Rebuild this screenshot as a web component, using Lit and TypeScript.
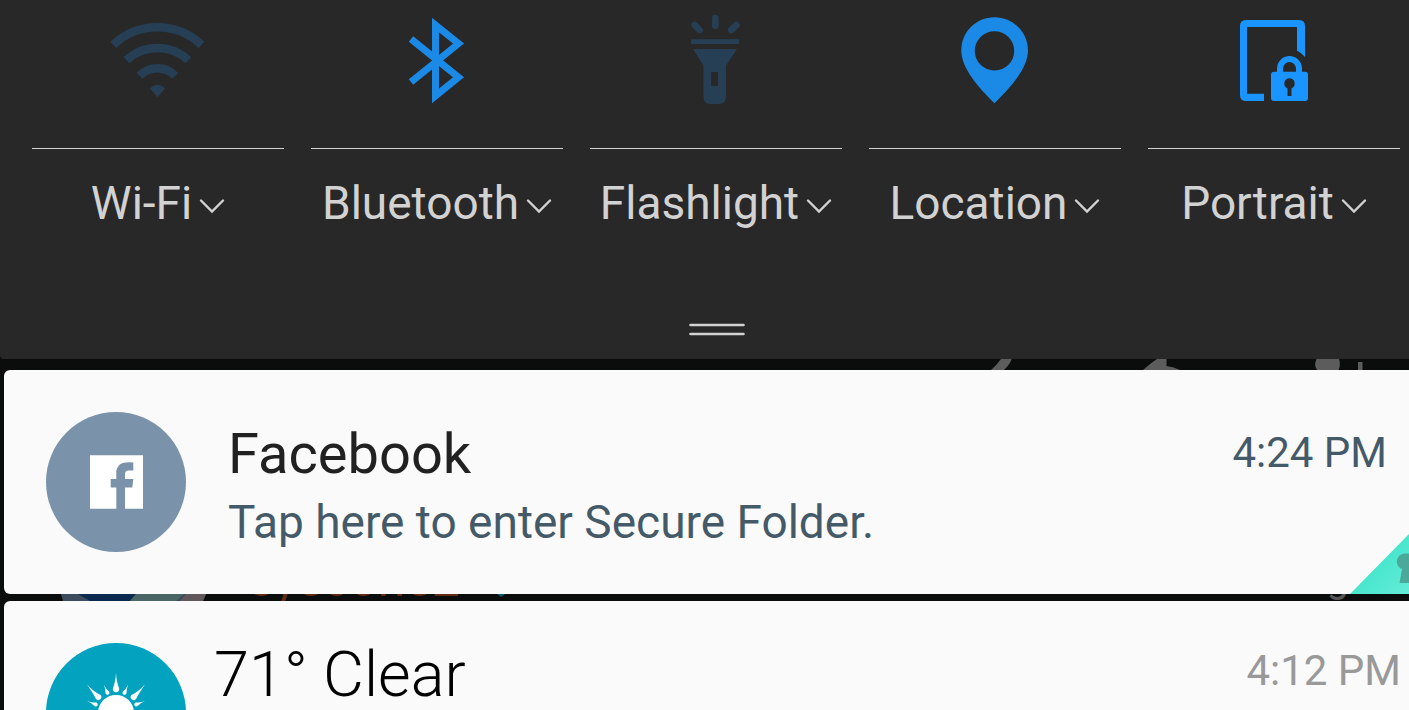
import { LitElement, html, svg, css } from "lit";
import { customElement, property } from "lit/decorators.js";

const icons = {
  wifi: svg`<g fill="none" stroke="#263f55" stroke-width="8.5">
      <path d="M5.300 44.900A64 64 0 0 1 93.500 44.900"/>
      <path d="M18.500 60.200A45 45 0 0 1 80.300 60.200"/>
      <path d="M31.600 75.900A24.500 24.500 0 0 1 67.200 75.900"/></g>
      <path fill="#263f55" d="M42 88.500Q49.400 81 57 88.500L49.400 97.300Z"/>`,
  bluetooth: svg`<path fill="none" stroke="#1b89e6" stroke-width="7" stroke-miterlimit="10"
      d="M24 39L71.500 77.300L48.500 96V25L71.500 43.600L24 82"/>`,
  flashlight: svg`<path stroke="#263f55" stroke-width="6.6" stroke-linecap="round"
      d="M49.300 18V25.700M28.600 25L33.700 30M70.500 25L65.300 30"/>
      <path fill="#263f55" d="M25 39.300H73V44H25Z"/>
      <path fill="#263f55" fill-rule="evenodd"
      d="M27 49H71L60 65.500V96Q60 104 53 104H44Q37.500 104 37.500 96V65.500ZM45 72V86H52V72Z"/>`,
  location: svg`<path fill="#1b89e6" fill-rule="evenodd"
      d="M49.500 17.300C68 17.300 83 32 83 50.500C83 68 66 87 49.500 103.300C33 87 16.300 68 16.300 50.500C16.300 32 31 17.300 49.500 17.300ZM49.500 31.200A19.700 19.700 0 1 0 49.500 70.600A19.700 19.700 0 1 0 49.500 31.200Z"/>`,
  portrait: svg`<path fill="#1a95ff"
      d="M22 20H75Q81 20 81 26V57Q77.500 52.500 73 50.700V27H23V93.700H40V101H22Q16 101 16 95V26Q16 20 22 20Z"/>
      <path fill="none" stroke="#1a95ff" stroke-width="6" d="M56 73V68.500A9.500 9.500 0 0 1 75 68.500V73"/>
      <path fill="#1a95ff" fill-rule="evenodd"
      d="M50 71.700H81Q84 71.700 84 74.700V98Q84 101 81 101H50Q47 101 47 98V74.700Q47 71.700 50 71.700ZM63.500 88.500V96H67.500V88.500A5.300 5.300 0 1 0 63.500 88.500Z"/>`,
};

@customElement("quick-toggle")
class QuickToggle extends LitElement {
  @property() label = "";
  @property() icon: keyof typeof icons = "wifi";

  static styles = css`
    :host { display: block; min-width: 0; }
    button {
      display: block; width: 100%; padding: 0; border: 0; background: none;
      color: #d2d2d2; font: inherit; text-align: center; white-space: nowrap;
    }
    .toggle { height: 149px; border-bottom: 1px solid #d2d2d2; box-sizing: border-box; }
    .toggle svg { display: block; width: 100px; height: 120px; margin: 0 auto 28px; }
    .details {
      display: flex; align-items: center; justify-content: center; gap: 7px;
      margin-top: 26px; font-size: 46px; line-height: 56px;
    }
    .details svg { width: 26px; height: 16px; margin-top: 6px; }
  `;

  render() {
    return html`
      <button class="toggle" aria-label=${this.label}>
        <svg viewBox="0 0 100 120">${icons[this.icon]}</svg>
      </button>
      <button class="details">
        ${this.label}
        <svg viewBox="0 0 26 16" fill="none" stroke="#d2d2d2" stroke-width="2.4" stroke-linecap="round">
          <path d="M2 2.500L13 13.500L24 2.500"/>
        </svg>
      </button>`;
  }
}

@customElement("app-root")
class AppRoot extends LitElement {
  static styles = css`
    :host {
      display: block; height: 100vh; overflow: hidden; background: #0b0d0c;
      font-family: Roboto, "Liberation Sans", sans-serif;
    }
    .panel {
      background: #282828; padding: 0 9px 23px 32px; border-radius: 0 0 0 4px;
    }
    .toggles { display: grid; grid-template-columns: repeat(5, minmax(0, 1fr)); gap: 27px; }
    .handle {
      display: block; width: 58px; height: 13px; margin: 92px auto 0; padding: 0; border: 0;
      background: none;
    }
    .handle svg { display: block; }
    .behind { position: relative; overflow: hidden; }
    .upper { height: 11px; }
    .lower { height: 7px; }
    .behind svg { position: absolute; top: 0; }
    .actions { right: 0; }
    .avatar { left: 60px; }
    .diamond { left: 492px; }
    .name, .age { position: absolute; bottom: -2px; line-height: 48px; white-space: nowrap; }
    .name { left: 247px; font-size: 50px; color: #642a14; }
    .age { right: 60px; font-size: 40px; color: #555; }
    .card {
      position: relative; display: flex; margin-left: 4px; background: #fafafa;
      border-radius: 6px 0 0 6px; padding: 42px 22px 42px 42px; overflow: hidden;
    }
    .badge { flex: none; width: 140px; height: 140px; }
    .body { flex: 1; min-width: 0; margin-left: 42px; padding-top: 8px; }
    .row { display: flex; justify-content: space-between; align-items: flex-start; }
    h2, p { margin: 0; font-weight: 400; }
    h2 { font-size: 56px; line-height: 68px; color: #212121; }
    p { font-size: 46px; line-height: 56px; margin-top: 6px; color: #455a68; }
    time { font-size: 42px; line-height: 66px; color: #455a68; white-space: nowrap; }
    .corner { position: absolute; right: 0; bottom: 0; }
    .weather { padding-right: 8px; }
    .weather .body { margin-left: 28px; padding-top: 0; }
    .weather h2 { font-size: 63px; line-height: 64px; font-weight: 300; color: #000; }
    .weather time { line-height: 56px; color: #999; }
  `;

  render() {
    return html`
      <section class="panel">
        <div class="toggles">
          <quick-toggle icon="wifi" label="Wi-Fi"></quick-toggle>
          <quick-toggle icon="bluetooth" label="Bluetooth"></quick-toggle>
          <quick-toggle icon="flashlight" label="Flashlight"></quick-toggle>
          <quick-toggle icon="location" label="Location"></quick-toggle>
          <quick-toggle icon="portrait" label="Portrait"></quick-toggle>
        </div>
        <button class="handle" aria-label="Expand panel">
          <svg width="58" height="13" viewBox="0 0 58 13">
            <path stroke="#d2d2d2" stroke-width="2.600" stroke-linecap="round" d="M3.500 2H56.500M3.500 11H56.500"/>
          </svg>
        </button>
      </section>
      <div class="behind upper" aria-hidden="true">
        <svg class="actions" width="449" height="11" viewBox="0 0 449 11" fill="#5c5c5c">
          <path d="M41 0H51.500Q51 4 44 11H31Q36 7 41 0Z"/>
          <path d="M197 0H206.500V7Q214 8 220 11H183Q191 4 197 0Z"/>
          <path d="M356.500 0H379Q381 6 378.500 11H357Q353.500 6 356.500 0Z"/>
          <path d="M398 3H402.500V11H398Z"/>
        </svg>
      </div>
      <article class="card">
        <svg class="badge" viewBox="0 0 140 140">
          <circle cx="70" cy="70" r="70" fill="#7a93aa"/>
          <path fill="#fff" d="M44 43.300H97V96.700H79V75.500H86.300L87.300 67H79V62Q79 58.500 82.500 58.500H87.300V50.500Q84 50 80 50.500C73 51 70.300 55.500 70.300 61V67H64.700V75.500H70.300V96.700H44Z"/>
        </svg>
        <div class="body">
          <div class="row"><h2>Facebook</h2><time>4:24 PM</time></div>
          <p>Tap here to enter Secure Folder.</p>
        </div>
        <svg class="corner" width="59" height="60" viewBox="0 0 59 60">
          <defs><linearGradient id="mint" x1="0" y1="0" x2="1" y2="1">
            <stop offset=".5" stop-color="#48e6cd"/><stop offset="1" stop-color="#66ecd8"/>
          </linearGradient></defs>
          <path fill="url(#mint)" d="M0 60L59 0V60Z"/>
          <path fill="#4ba99a" d="M59 19.500H55A8 8 0 0 0 52 35L49.500 49H59Z"/>
        </svg>
      </article>
      <div class="behind lower" aria-hidden="true">
        <svg class="avatar" width="146" height="7" viewBox="0 0 146 7">
          <path fill="#3c4c5c" d="M1 0H146L143 7H3Z"/>
          <path fill="#0c2a50" d="M18 0H76L70 7H30Z"/>
          <path fill="#4a6664" d="M76 0H124L116 7H70Z"/>
          <path fill="#605858" d="M126 0H146L143 7H120Z"/>
        </svg>
        <span class="name">eyecone2</span>
        <svg class="diamond" width="16" height="7" viewBox="0 0 16 7"><path fill="#0c5a68" d="M5 0H13L9 3Z"/></svg>
        <span class="age">g</span>
      </div>
      <article class="card weather">
        <svg class="badge" viewBox="0 0 140 140">
          <circle cx="70" cy="70" r="70" fill="#03a3bf"/>
          <g fill="#fff">
            <circle cx="70" cy="70" r="18"/>
            <path d="M70 30Q70.500 39 73 45A3.200 3.200 0 1 1 67 45Q69.500 39 70 30Z"/>
            <path d="M41 41.500Q48 49 54.500 52A3 3 0 1 1 50 56Q47 50 41 41.500Z"/>
            <path d="M99 41.500Q92 49 85.500 52A3 3 0 1 0 90 56Q93 50 99 41.500Z"/>
            <path d="M58 42Q60 46 62.500 48A2 2 0 1 1 59.500 50Q59.500 46 58 42Z"/>
            <path d="M82 42Q80 46 77.500 48A2 2 0 1 0 80.500 50Q80.500 46 82 42Z"/>
            <path d="M41 58Q46 60 50 59.500A2 2 0 1 1 48 62.500Q45 59.500 41 58Z"/>
            <path d="M99 58Q94 60 90 59.500A2 2 0 1 0 92 62.500Q95 59.500 99 58Z"/>
          </g>
        </svg>
        <div class="body">
          <div class="row"><h2>71° Clear</h2><time>4:12 PM</time></div>
        </div>
      </article>`;
  }
}
